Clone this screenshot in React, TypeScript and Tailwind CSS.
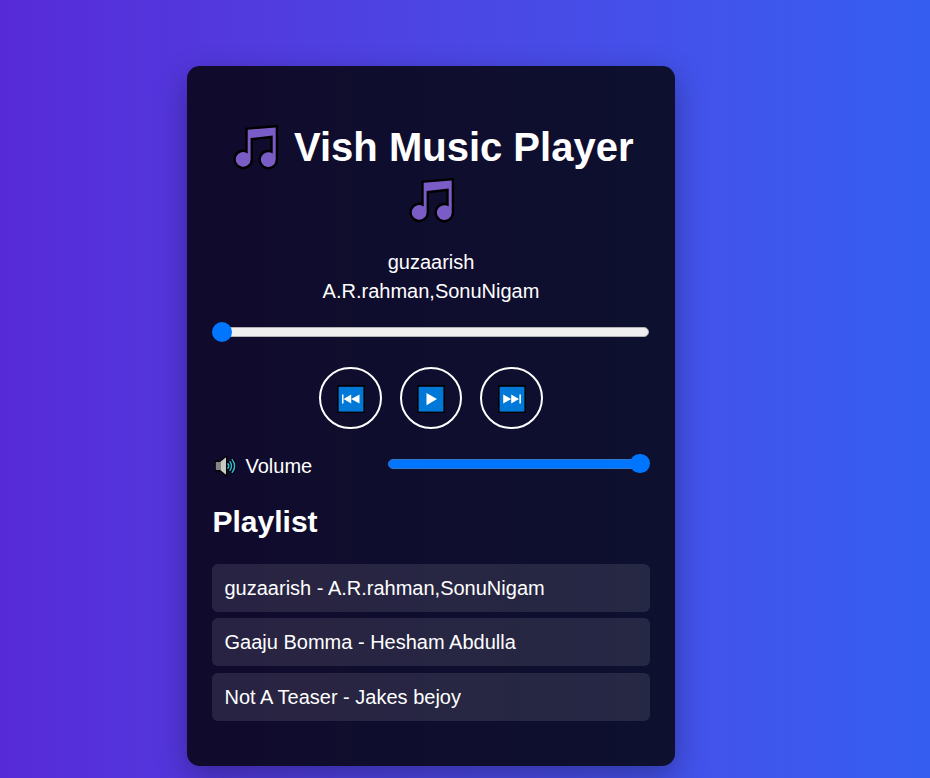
import React from "react";

function Note() {
  const shape =
    "M14.7 5.8 L42.7 3.4 V35.3 A7.4 7.4 0 1 1 39.7 29.6 V11.6 L17.6 14 V35.3 A7.4 7.4 0 1 1 14.7 29.5 Z";
  return (
    <svg className="h-[46px] w-[46px] shrink-0" viewBox="0 0 46 46">
      <path d={shape} fill="#000" stroke="#000" strokeWidth="4.8" strokeLinejoin="miter" />
      <path d={shape} fill="#7a5cc6" />
    </svg>
  );
}

function Speaker() {
  return (
    <svg className="h-[22px] w-[24px]" viewBox="0 0 24 22">
      <path d="M2 7 H6 L12 2.3 V19.7 L6 15 H2 Z" fill="#000" stroke="#000" strokeWidth="2.4" />
      <path d="M1.8 7 H6.5 V15 H1.8 Z" fill="#858585" />
      <path d="M6.5 6.8 L12 2.3 V19.7 L6.5 15.2 Z" fill="#c8c8c4" />
      <g fill="none" strokeLinecap="round">
        <path d="M13.9 8.8 Q15.6 11 13.9 13.2 M16 6.6 Q19 11 16 15.4 M18.2 4.6 Q23 11 18.2 17.4" stroke="#000" strokeWidth="3.2" />
        <path d="M13.9 8.8 Q15.6 11 13.9 13.2 M16 6.6 Q19 11 16 15.4 M18.2 4.6 Q23 11 18.2 17.4" stroke="#35b6d3" strokeWidth="1.5" />
      </g>
    </svg>
  );
}

function ControlButton({ label, path }: { label: string; path: string }) {
  return (
    <button
      aria-label={label}
      className="flex h-[62px] w-[62.5px] items-center justify-center rounded-full border-2 border-white pt-[2px]"
    >
      <svg className="h-[28px] w-[28px]" viewBox="0 0 28 28">
        <rect width="28" height="28" rx="1" fill="#000" />
        <rect x="1.6" y="1.8" width="24.8" height="24.8" fill="#0078d7" />
        <path d={path} fill="#fff" />
      </svg>
    </button>
  );
}

const controls = [
  { label: "Previous", path: "M5 9.5h1.5v9H5z M6.6 14l7.6-4.5v9z M14.2 14l8.3-4.6v9.2z" },
  { label: "Play", path: "M9.5 8L20 14.1 9.5 20.2z" },
  { label: "Next", path: "M5.2 9.4L13.2 14 5.2 18.6z M13.2 9.5L21 14l-7.8 4.5z M21.4 9.5h1.5v9h-1.5z" },
];

const songs = [
  { title: "guzaarish", artist: "A.R.rahman,SonuNigam" },
  { title: "Gaaju Bomma", artist: "Hesham Abdulla" },
  { title: "Not A Teaser", artist: "Jakes bejoy" },
];

export default function App() {
  return (
    <div className="h-[778px] w-[930px] overflow-hidden bg-linear-to-r from-[#572ad8] to-[#355ef1] pt-[66px] pl-[187px] font-['Liberation_Sans',Arial,sans-serif] text-[20px] leading-[23px] text-white">
      <main className="h-[700px] w-[488px] rounded-[12.5px] bg-black/80 px-[25px] pt-[55px] shadow-[0_10px_31px_rgba(0,0,0,0.3)]">
        <h1 className="flex flex-col items-center text-[40px] leading-[52px] font-bold">
          <span className="flex h-[52px] items-center pl-[4px]">
            <Note />
            <span className="mb-px ml-[15.5px] whitespace-nowrap">Vish Music Player</span>
          </span>
          <span className="flex h-[53px] items-center pl-px">
            <Note />
          </span>
        </h1>

        <div className="mt-[25px] text-center">
          <p>guzaarish</p>
          <p className="mt-[6px]">A.R.rahman,SonuNigam</p>
        </div>

        <div className="mt-[19px] flex h-5 items-center">
          <div className="z-10 h-[19.5px] w-[19.5px] rounded-full bg-[#0075ff]" />
          <div className="mr-px -ml-[10px] h-[10px] flex-1 rounded-full border border-[#b2b2b2] bg-[#efefef]" />
        </div>

        <div className="mt-[25px] flex justify-center gap-[18px]">
          {controls.map((control) => (
            <ControlButton key={control.label} {...control} />
          ))}
        </div>

        <div className="mt-[24px] flex h-[26px] items-center justify-between">
          <label className="flex items-center gap-[8px] pl-[1.5px]">
            <Speaker />
            <span>Volume</span>
          </label>
          <div className="mr-[0.5px] mb-[5px] flex w-[262px] items-center">
            <div className="-mr-[10px] h-[10px] flex-1 rounded-full border border-[#3079cd] bg-[#0075ff]" />
            <div className="h-[19.5px] w-[19.5px] rounded-full bg-[#0075ff]" />
          </div>
        </div>

        <h2 className="mt-[26px] pl-[0.5px] text-[30px] leading-[34px] font-bold">Playlist</h2>

        <ul className="mt-[25px] flex flex-col">
          {songs.map((song) => (
            <li key={song.title} className="mb-[6.4px] h-[48px] rounded-[6px] bg-white/10 px-[12.5px] pt-[13px]">
              {song.title} - {song.artist}
            </li>
          ))}
        </ul>
      </main>
    </div>
  );
}
